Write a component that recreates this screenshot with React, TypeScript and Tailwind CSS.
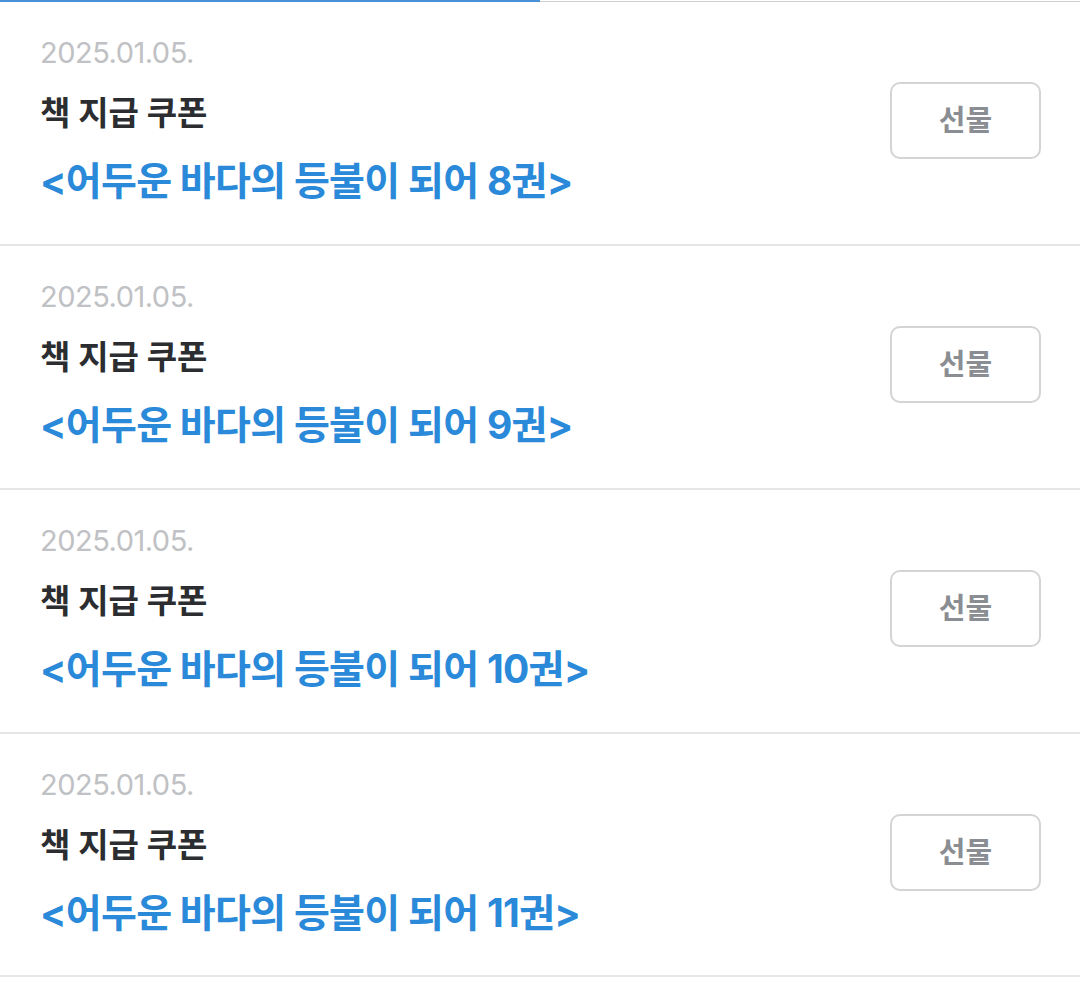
const items = ["8권", "9권", "10권", "11권"];

function CouponRow({ volume }: { volume: string }) {
  return (
    <div className="flex items-start justify-between h-[244px] pt-[33px] pl-[40px] pr-[39px] border-b-2 border-[#e6e6e6] last:h-[243px]">
      <div className="flex flex-col">
        <p className="text-[29px] leading-[36px] text-[#bfc1c4] tracking-[-0.5px]">2025.01.05.</p>
        <p className="mt-[20px] text-[33px] leading-[44px] font-bold text-[#2b2d30]">책 지급 쿠폰</p>
        <p className="mt-[22px] text-[39px] leading-[48px] font-bold text-[#2a8ad9] tracking-[-0.7px]">
          &lt;어두운 바다의 등불이 되어 {volume}&gt;
        </p>
      </div>
      <button className="mt-[47px] w-[151px] h-[77px] rounded-[10px] border-2 border-[#d3d4d6] bg-white text-[29px] font-bold text-[#8a8d92]">
        선물
      </button>
    </div>
  );
}

export default function App() {
  return (
    <div className="w-[1080px] h-[996px] bg-white font-['Inter','Noto_Sans_CJK_KR',sans-serif]">
      <div className="flex h-[2px]">
        <div className="w-[540px] bg-[#4a90d9]" />
        <div className="flex-1 flex flex-col">
          <div className="h-px" />
          <div className="h-px bg-[#d0d0d0]" />
        </div>
      </div>
      {items.map((v) => (
        <CouponRow key={v} volume={v} />
      ))}
    </div>
  );
}
